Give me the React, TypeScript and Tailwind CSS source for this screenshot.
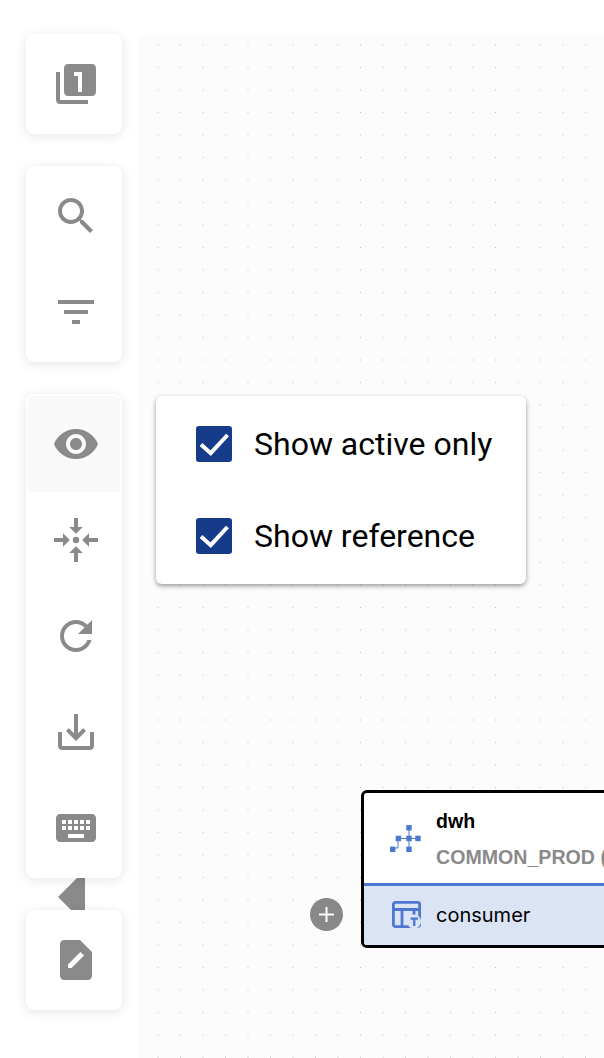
import type { ReactNode } from "react";

const ICONS = {
  layers:
    "M4 6H2v14c0 1.1.9 2 2 2h14v-2H4V6zm16-4H8c-1.1 0-2 .9-2 2v12c0 1.1.9 2 2 2h12c1.1 0 2-.9 2-2V4c0-1.1-.9-2-2-2zm-5 14h-2V8h-2V6h4v10z",
  search:
    "M15.5 14h-.79l-.28-.27C15.41 12.59 16 11.11 16 9.5 16 5.91 13.09 3 9.5 3S3 5.91 3 9.5 5.91 16 9.5 16c1.61 0 3.09-.59 4.23-1.57l.27.28v.79l5 4.99L20.49 19l-4.99-5zm-6 0C7.01 14 5 11.99 5 9.5S7.01 5 9.5 5 14 7.01 14 9.5 11.99 14 9.5 14z",
  filter: "M10 18h4v-2h-4v2zM3 6v2h18V6H3zm3 7h12v-2H6v2z",
  eye: "M12 4.5C7 4.5 2.73 7.61 1 12c1.73 4.39 6 7.5 11 7.5s9.27-3.11 11-7.5c-1.73-4.39-6-7.5-11-7.5zM12 17c-2.76 0-5-2.24-5-5s2.24-5 5-5 5 2.24 5 5-2.24 5-5 5zm0-8c-1.66 0-3 1.34-3 3s1.34 3 3 3 3-1.34 3-3-1.34-3-3-3z",
  focus:
    "M11 1h2v4.5h2.4L12 8.9 8.6 5.5H11zM11 23h2v-4.5h2.4L12 15.1l-3.4 3.4H11zM1 11v2h4.5v2.4L8.9 12 5.5 8.6V11zM23 11v2h-4.5v2.4L15.1 12l3.4-3.4V11zM12 10.4a1.6 1.6 0 1 0 0 3.2 1.6 1.6 0 0 0 0-3.2z",
  refresh:
    "M17.65 6.35C16.2 4.9 14.21 4 12 4c-4.42 0-7.99 3.58-7.99 8s3.57 8 7.99 8c3.73 0 6.84-2.55 7.73-6h-2.08c-.82 2.33-3.04 4-5.65 4-3.31 0-6-2.69-6-6s2.69-6 6-6c1.66 0 3.14.69 4.22 1.78L13 11h7V4l-2.35 2.35z",
  save: "M19 12v7H5v-7H3v7c0 1.1.9 2 2 2h14c1.1 0 2-.9 2-2v-7h-2zm-6 .67l2.59-2.58L17 11.5l-5 5-5-5 1.41-1.41L11 12.67V3h2z",
  keyboard:
    "M20 5H4c-1.1 0-1.99.9-1.99 2L2 17c0 1.1.9 2 2 2h16c1.1 0 2-.9 2-2V7c0-1.1-.9-2-2-2zm-9 3h2v2h-2V8zm0 3h2v2h-2v-2zM8 8h2v2H8V8zm0 3h2v2H8v-2zm-1 2H5v-2h2v2zm0-3H5V8h2v2zm9 7H8v-2h8v2zm0-4h-2v-2h2v2zm0-3h-2V8h2v2zm3 3h-2v-2h2v2zm0-3h-2V8h2v2z",
  note: "M6 2c-1.1 0-2 .9-2 2v16c0 1.1.9 2 2 2h12c1.1 0 2-.9 2-2V8l-6-6H6zm2 14v-1.8L14.2 8l1.8 1.8L9.8 16H8z",
};

function ToolButton({ d, active }: { d: string; active?: boolean }) {
  return (
    <div
      className={`flex h-24 w-full items-center justify-center pl-1 ${active ? "rounded-t-[6px] rounded-bl-[6px] bg-[#f9f9f9]" : ""}`}
    >
      <svg viewBox="0 0 24 24" className="h-12 w-12 fill-[#8a8a8a]" fillRule="evenodd">
        <path d={d} />
      </svg>
    </div>
  );
}

function ToolCard({ children }: { children: ReactNode }) {
  return (
    <div className="relative z-10 w-24 rounded-lg border-2 border-white bg-white shadow-[0_2px_12px_rgba(0,0,0,0.11)]">
      {children}
    </div>
  );
}

function CheckRow({ label }: { label: string }) {
  return (
    <div className="flex h-[92px] items-center pl-10">
      <div className="flex h-9 w-9 items-center justify-center rounded-[3px] bg-[#173b8b]">
        <svg viewBox="0 0 36 36" className="h-9 w-9 fill-none stroke-white stroke-[4]">
          <path d="M5 18.5l9.7 8.7L31.5 9" />
        </svg>
      </div>
      <span className="ml-[22px] text-[32px] leading-none text-black">{label}</span>
    </div>
  );
}

function SchemaIcon() {
  return (
    <svg viewBox="0 0 31 27" className="h-[27px] w-[31px] fill-[#4c78d0]">
      <rect x="16.3" y="0" width="5.4" height="5.5" />
      <rect x="5.7" y="10.7" width="5.4" height="5.5" />
      <rect x="16.3" y="10.7" width="5.4" height="5.5" />
      <rect x="25.3" y="10.7" width="5.4" height="5.5" />
      <rect x="0" y="21.6" width="5.4" height="5.4" />
      <rect x="16.3" y="21.6" width="5.4" height="5.4" />
      <path d="M18.5 4h1v19h-1zM9 13h18v1H9zM7.5 15h1v7.5a1 1 0 0 1-1 1H4v-1h3.5z" />
    </svg>
  );
}

function TableIcon() {
  return (
    <svg viewBox="0 0 29 27" className="h-[27px] w-[29px]">
      <rect x="1.4" y="1.4" width="26.2" height="24.2" rx="2" className="fill-none stroke-[#4c78d0] stroke-[2.8]" />
      <path d="M1 8.5h27M10 8.5v17M22 8.5v6" className="fill-none stroke-[#4c78d0] stroke-[2.8]" />
      <circle cx="22" cy="20.5" r="7" className="fill-[#dbe4f5]" />
      <path d="M18.5 16.5h7.5v2.2h-2.6V25h-2.3v-6.3h-2.6z" className="fill-[#4c78d0]" />
    </svg>
  );
}

export default function App() {
  return (
    <div className="relative flex h-[1058px] w-[604px] overflow-hidden bg-white font-['Inter',sans-serif]">
      {/* toolbar column */}
      <div className="relative flex w-[138px] shrink-0 flex-col gap-8 pl-[26px] pt-[34px]">
        <ToolCard>
          <ToolButton d={ICONS.layers} />
        </ToolCard>
        <ToolCard>
          <ToolButton d={ICONS.search} />
          <ToolButton d={ICONS.filter} />
        </ToolCard>
        <ToolCard>
          <ToolButton d={ICONS.eye} active />
          <ToolButton d={ICONS.focus} />
          <ToolButton d={ICONS.refresh} />
          <ToolButton d={ICONS.save} />
          <ToolButton d={ICONS.keyboard} />
        </ToolCard>
        <ToolCard>
          <ToolButton d={ICONS.note} />
        </ToolCard>
        {/* collapse handle, sits behind the cards */}
        <svg viewBox="0 0 27 54" className="absolute left-[58px] top-[870px] z-0 h-[54px] w-[27px] fill-[#8a8a8a]">
          <path d="M27 0v54L0 27z" />
        </svg>
      </div>

      {/* canvas */}
      <div className="relative mt-[34px] flex-1 bg-[#fcfcfc] bg-[radial-gradient(circle,#c4c4c4_0.6px,transparent_1px)] bg-[length:22.5px_22.5px] bg-[position:8.75px_-0.25px]">
        <div className="absolute left-[18px] top-[362px] z-20 w-[370px] rounded-md bg-white py-[2px] font-['Roboto',sans-serif] shadow-[0_2px_5px_rgba(0,0,0,0.4)]">
          <CheckRow label="Show active only" />
          <CheckRow label="Show reference" />
        </div>

        <div className="absolute left-[171.5px] top-[864px] flex h-[33px] w-[33px] items-center justify-center rounded-full bg-[#888888]">
          <svg viewBox="0 0 33 33" className="h-[33px] w-[33px] stroke-white stroke-2">
            <path d="M16.5 9v15M9 16.5h15" />
          </svg>
        </div>

        <div className="absolute left-[223px] top-[756px] w-[400px] overflow-hidden rounded-md border-[3px] border-black bg-white">
          <div className="flex h-[90px] items-center">
            <div className="w-[72px] shrink-0 pl-[26px]">
              <SchemaIcon />
            </div>
            <div className="flex flex-col gap-[14px] pt-[2px] font-['Liberation_Sans',sans-serif]">
              <span className="text-[19.6px] font-bold leading-[22px] text-black">dwh</span>
              <span className="whitespace-nowrap text-[19.6px] font-bold leading-[22px] text-[#8a8a8a]">COMMON_PROD (</span>
            </div>
          </div>
          <div className="flex h-[62px] items-center border-t-[3px] border-[#4c78d0] bg-[#dbe4f5] pb-[2px]">
            <div className="w-[72px] shrink-0 pl-[28px]">
              <TableIcon />
            </div>
            <span className="text-xl text-black">consumer</span>
          </div>
        </div>
      </div>
    </div>
  );
}
